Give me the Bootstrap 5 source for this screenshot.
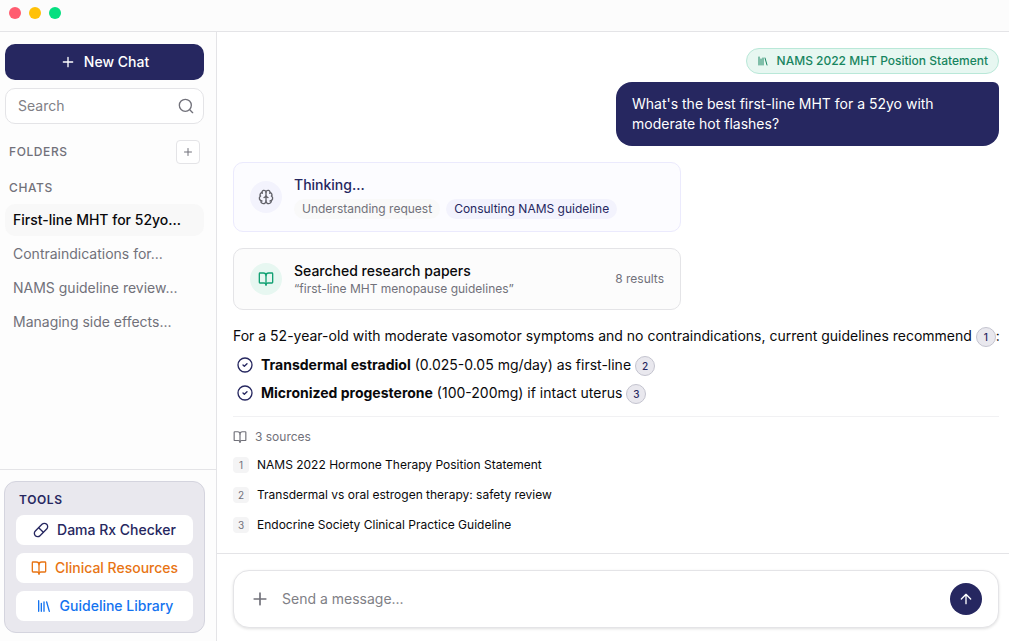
<!DOCTYPE html>
<html lang="en">
<head>
<meta charset="utf-8">
<meta name="viewport" content="width=device-width, initial-scale=1">
<title>Dama Chat</title>
<link href="https://cdn.jsdelivr.net/npm/bootstrap@5.3.0/dist/css/bootstrap.min.css" rel="stylesheet">
<style>
  :root { --navy: #262760; --line: #e4e4e7; --soft: #71717a; --green: #178560; }
  body { font-family: Inter, "Liberation Sans", sans-serif; font-size: 14px; line-height: 20px; color: #09090b; background: #fff; }
  button { font: inherit; }
  a { text-decoration: none; color: inherit; }
  svg { flex: none; fill: none; stroke: currentColor; stroke-width: 2; stroke-linecap: round; stroke-linejoin: round; }
  .line-b { border-bottom: 1px solid var(--line); }
  .line-t { border-top: 1px solid var(--line); }
  .titlebar { height: 32px; flex: none; padding: 0 9px 6px; background: #fcfcfc; }
  .dot { width: 12px; height: 12px; border-radius: 50%; }
  .body-row, .sidebar, .chat-pane { min-width: 0; min-height: 0; }
  .sidebar { flex: 0 0 217px; background: #fdfdfd; border-right: 1px solid var(--line); }
  .side-top { padding: 12px 12px 0 5px; }
  .btn-navy { --bs-btn-bg: var(--navy); --bs-btn-color: #fff; --bs-btn-hover-bg: #34357a; --bs-btn-hover-color: #fff; --bs-btn-border-color: transparent; height: 36px; border-radius: 10px; font-size: 14px; font-weight: 500; line-height: 20px; padding: 0; }
  .search-box { height: 36px; border: 1px solid var(--line); border-radius: 10px; background: #fff; padding: 0 9px 0 12px; color: var(--soft); }
  .bare { border: 0; outline: 0; background: transparent; min-width: 0; padding: 0; color: inherit; }
  .bare::placeholder { color: #808086; opacity: 1; }
  .caps { font-size: 12px; line-height: 16px; font-weight: 500; letter-spacing: .05em; color: var(--soft); margin: 0; }
  .add-folder { width: 24px; height: 24px; border: 1px solid var(--line); border-radius: 4px; background: #fff; color: var(--soft); padding: 0; }
  .chat-item { padding: 6px 8px; border-radius: 10px; color: var(--soft); }
  .chat-item.active { background: #f8f8f8; color: #09090b; font-weight: 500; }
  .side-foot { padding: 11px 11px 8px 4px; }
  .tools { background: #e9e8ee; border: 1px solid #d4d4de; border-radius: 12px; padding: 11px; }
  .tools .caps { color: var(--navy); line-height: 14px; padding-left: 3px; font-weight: 600; }
  .tool { height: 30px; border-radius: 8px; background: #fff; font-weight: 500; }
  .thread { padding: 16px 10px 0 16px; }
  .context-pill { height: 26px; padding: 0 10px; border: 1px solid #b9e8d8; border-radius: 13px; background: #e7f7f1; color: var(--green); font-size: 12px; font-weight: 500; }
  .bubble { background: var(--navy); color: #fff; padding: 12px 16px; border-radius: 16px 6px 16px 16px; }
  .step { max-width: 448px; border: 1px solid var(--line); border-radius: 10px; background: #fcfcfc; padding: 0 16px; }
  .step-think { background: #fcfcff; border-color: #ebeafd; }
  .disc { width: 32px; height: 32px; border-radius: 50%; background: #f3f3fd; color: #606068; flex: none; }
  .disc-green { background: #e7f7f1; color: #12a173; }
  .tiny { font-size: 12px; line-height: 16px; }
  .tag { padding: 2px 8px; border-radius: 10px; font-size: 12px; line-height: 16px; background: #f9f9f9; color: var(--soft); }
  .tag-on { background: #f3f3fd; color: var(--navy); }
  .tag-row { gap: 6px; }
  .grey { color: var(--soft); }
  .navy { color: var(--navy); }
  .answer { margin-right: -8px; }
  .cite { display: inline-flex; align-items: center; justify-content: center; width: 20px; height: 20px; border: 1px solid #c4c4cf; border-radius: 50%; background: #e9e8ee; color: var(--navy); font-size: 10px; line-height: 12px; font-weight: 500; vertical-align: middle; }
  .points li { height: 20px; }
  .sources { margin-top: 13px; padding-top: 12px; border-top: 1px solid #f1f1f3; }
  .sources h3 { margin: 0 0 12px; font-weight: 400; }
  .sources ol { gap: 14px; }
  .num { width: 16px; height: 16px; border-radius: 4px; background: #f4f4f5; color: var(--soft); font-size: 10px; line-height: 16px; text-align: center; flex: none; }
  .composer-wrap { padding: 16px 10px 13px 16px; }
  .composer { height: 58px; border: 1px solid var(--line); border-radius: 16px; background: #fff; box-shadow: 0 1px 3px rgba(0,0,0,.12); padding: 0 16px; }
  .send { width: 32px; height: 32px; border-radius: 50%; border: 0; background: var(--navy); color: #fff; padding: 0; }
</style>
</head>
<body class="vh-100 d-flex flex-column">
<svg class="d-none" xmlns="http://www.w3.org/2000/svg">
  <symbol id="plus" viewBox="0 0 24 24"><path d="M5 12h14M12 5v14"/></symbol>
  <symbol id="book" viewBox="0 0 24 24"><path d="M12 7v14"/><path d="M3 18a1 1 0 0 1-1-1V4a1 1 0 0 1 1-1h5a4 4 0 0 1 4 4 4 4 0 0 1 4-4h5a1 1 0 0 1 1 1v13a1 1 0 0 1-1 1h-6a3 3 0 0 0-3 3 3 3 0 0 0-3-3z"/></symbol>
  <symbol id="library" viewBox="0 0 24 24"><path d="m16 6 4 14M12 6v14M8 8v12M4 4v16"/></symbol>
  <symbol id="check" viewBox="0 0 24 24"><circle cx="12" cy="12" r="10.500"/><path d="m9 12 2 2 4-4"/></symbol>
</svg>

<header class="titlebar line-b d-flex align-items-center gap-2">
  <span class="dot" style="background:#ff5c70"></span>
  <span class="dot" style="background:#ffc107"></span>
  <span class="dot" style="background:#05df80"></span>
</header>

<div class="body-row d-flex flex-grow-1">
  <aside class="sidebar d-flex flex-column">
    <div class="side-top flex-grow-1">
      <button type="button" class="btn btn-navy w-100 d-flex align-items-center justify-content-center gap-2 mb-2">
        <svg width="16" height="16"><use href="#plus"/></svg>New Chat
      </button>
      <div class="search-box d-flex align-items-center mb-3">
        <input type="text" class="bare flex-grow-1" placeholder="Search" aria-label="Search chats">
        <svg width="16" height="16" viewBox="0 0 24 24"><circle cx="11" cy="11" r="9"/><path d="m22 22-4-4"/></svg>
      </div>
      <div class="d-flex align-items-center justify-content-between ps-1 pe-1 mb-3">
        <h2 class="caps">FOLDERS</h2>
        <button type="button" class="add-folder d-flex align-items-center justify-content-center" aria-label="Add folder"><svg width="12" height="12"><use href="#plus"/></svg></button>
      </div>
      <h2 class="caps ps-1 mb-2">CHATS</h2>
      <nav class="d-grid" style="gap:2px">
        <a href="#" class="chat-item active">First-line MHT for 52yo...</a>
        <a href="#" class="chat-item">Contraindications for...</a>
        <a href="#" class="chat-item">NAMS guideline review...</a>
        <a href="#" class="chat-item">Managing side effects...</a>
      </nav>
    </div>
    <div class="side-foot line-t">
      <section class="tools d-grid gap-2">
        <h2 class="caps">TOOLS</h2>
        <a href="#" class="tool navy d-flex align-items-center justify-content-center gap-2">
          <svg width="16" height="16" viewBox="0 0 24 24"><path d="m10.500 20.500 10-10a4.950 4.950 0 1 0-7-7l-10 10a4.950 4.950 0 1 0 7 7Z"/><path d="m8.500 8.500 7 7"/></svg>Dama Rx Checker</a>
        <a href="#" class="tool d-flex align-items-center justify-content-center gap-2" style="color:#e87414">
          <svg width="16" height="16"><use href="#book"/></svg>Clinical Resources</a>
        <a href="#" class="tool d-flex align-items-center justify-content-center gap-2" style="color:#1473f0">
          <svg width="16" height="16"><use href="#library"/></svg>Guideline Library</a>
      </section>
    </div>
  </aside>

  <main class="chat-pane flex-grow-1 d-flex flex-column">
    <div class="thread flex-grow-1">
      <div class="d-flex flex-column align-items-end gap-2 mb-3">
        <span class="context-pill d-flex align-items-center gap-2"><svg width="12" height="12"><use href="#library"/></svg>NAMS 2022 MHT Position Statement</span>
        <div class="bubble w-50">What's the best first-line MHT for a 52yo with moderate hot flashes?</div>
      </div>

      <div class="step step-think d-flex align-items-center mb-3" style="height:70px">
        <span class="disc d-flex align-items-center justify-content-center me-2">
          <svg width="16" height="16" viewBox="0 0 24 24"><path d="M12 18V5M15 13a4.170 4.170 0 0 1-3-4 4.170 4.170 0 0 1-3 4"/><path d="M17.598 6.500A3 3 0 1 0 12 5a3 3 0 1 0-5.598 1.500M17.997 5.125a4 4 0 0 1 2.526 5.770M18 18a4 4 0 0 0 2-7.464"/><path d="M19.967 17.483A4 4 0 1 1 12 18a4 4 0 1 1-7.967-.517M6 18a4 4 0 0 1-2-7.464M6.003 5.125a4 4 0 0 0-2.526 5.770"/></svg>
        </span>
        <div class="ps-1">
          <div class="navy fw-medium mb-1" style="font-weight:500">Thinking...</div>
          <div class="tag-row d-flex"><span class="tag">Understanding request</span><span class="tag tag-on">Consulting NAMS guideline</span></div>
        </div>
      </div>

      <div class="step d-flex align-items-center mb-3" style="height:62px">
        <span class="disc disc-green d-flex align-items-center justify-content-center me-2"><svg width="16" height="16"><use href="#book"/></svg></span>
        <div class="ps-1 flex-grow-1">
          <div class="fw-medium" style="font-weight:500">Searched research papers</div>
          <div class="tiny grey">“first-line MHT menopause guidelines”</div>
        </div>
        <span class="tiny grey">8 results</span>
      </div>

      <p class="answer mb-2">For a 52-year-old with moderate vasomotor symptoms and no contraindications, current guidelines recommend <a href="#s1" class="cite">1</a>:</p>
      <ul class="points list-unstyled d-grid gap-2 mb-0 ps-1">
        <li class="d-flex align-items-center gap-2"><svg class="navy" width="16" height="16"><use href="#check"/></svg><span><strong class="fw-bold">Transdermal estradiol</strong> (0.025-0.05 mg/day) as first-line <a href="#s2" class="cite">2</a></span></li>
        <li class="d-flex align-items-center gap-2"><svg class="navy" width="16" height="16"><use href="#check"/></svg><span><strong class="fw-bold">Micronized progesterone</strong> (100-200mg) if intact uterus <a href="#s3" class="cite">3</a></span></li>
      </ul>

      <section class="sources">
        <h3 class="tiny grey d-flex align-items-center gap-2"><svg width="14" height="14"><use href="#book"/></svg>3 sources</h3>
        <ol class="list-unstyled tiny d-grid mb-0">
          <li id="s1" class="d-flex gap-2"><span class="num">1</span>NAMS 2022 Hormone Therapy Position Statement</li>
          <li id="s2" class="d-flex gap-2"><span class="num">2</span>Transdermal vs oral estrogen therapy: safety review</li>
          <li id="s3" class="d-flex gap-2"><span class="num">3</span>Endocrine Society Clinical Practice Guideline</li>
        </ol>
      </section>
    </div>

    <form class="composer-wrap line-t">
      <div class="composer d-flex align-items-center">
        <button type="button" class="bare grey d-flex me-2" aria-label="Attach"><svg width="20" height="20"><use href="#plus"/></svg></button>
        <input type="text" class="bare flex-grow-1 ms-1" placeholder="Send a message..." aria-label="Message">
        <button type="button" class="send d-flex align-items-center justify-content-center" aria-label="Send"><svg width="16" height="16" viewBox="0 0 24 24"><path d="m5 12 7-7 7 7M12 19V5"/></svg></button>
      </div>
    </form>
  </main>
</div>
<script src="https://cdn.jsdelivr.net/npm/bootstrap@5.3.0/dist/js/bootstrap.bundle.min.js"></script>
</body>
</html>
